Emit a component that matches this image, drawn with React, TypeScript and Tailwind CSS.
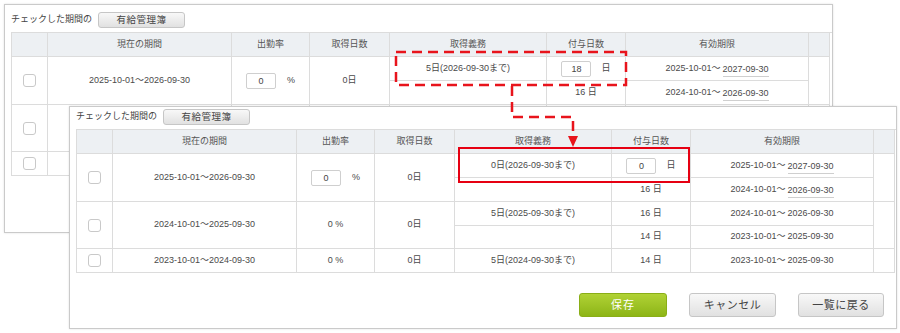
import React from "react";

type Sub = {
  obligation: string;
  grant: string;
  grantInput?: boolean;
  from: string;
  to: string;
  underline?: boolean;
};

type Row = {
  period: string;
  rate: string;
  rateInput?: boolean;
  days: string;
  subs: Sub[];
};

const laterRows: Row[] = [
  {
    period: "2024-10-01～2025-09-30",
    rate: "0 %",
    days: "0日",
    subs: [
      { obligation: "5日(2025-09-30まで)", grant: "16 日", from: "2024-10-01～", to: "2026-09-30" },
      { obligation: "", grant: "14 日", from: "2023-10-01～", to: "2025-09-30" },
    ],
  },
  {
    period: "2023-10-01～2024-09-30",
    rate: "0 %",
    days: "0日",
    subs: [{ obligation: "5日(2024-09-30まで)", grant: "14 日", from: "2023-10-01～", to: "2025-09-30" }],
  },
];

// the back screenshot's lower rows sit under the front one, only their left edge shows
const coveredRows: Row[] = laterRows.map((row) => ({
  period: "",
  rate: "",
  days: "",
  subs: row.subs.map(() => ({ obligation: "", grant: "", from: "", to: "" })),
}));

const firstRow = (obligation: string, grant: string): Row => ({
  period: "2025-10-01～2026-09-30",
  rate: "0",
  rateInput: true,
  days: "0日",
  subs: [
    { obligation, grant, grantInput: true, from: "2025-10-01～", to: "2027-09-30", underline: true },
    { obligation: "", grant: "16 日", from: "2024-10-01～", to: "2026-09-30", underline: true },
  ],
});

const backRows: Row[] = [firstRow("5日(2026-09-30まで)", "18"), ...coveredRows];
const frontRows: Row[] = [firstRow("0日(2026-09-30まで)", "0"), ...laterRows];

const headers = ["", "現在の期間", "出勤率", "取得日数", "取得義務", "付与日数", "有効期限", ""];

function Checkbox() {
  return <span className="block w-[13px] h-[13px] rounded-[3px] border border-[#c9c9c9] bg-white" />;
}

function SmallInput({ value }: { value: string }) {
  return (
    <input
      readOnly
      value={value}
      className="w-[30px] h-[16px] rounded-[2px] border border-[#cfcfcf] bg-white text-center text-[9px] text-[#444] outline-none"
    />
  );
}

function GrayButton({ label, className }: { label: string; className?: string }) {
  return (
    <button
      className={`flex items-center justify-center rounded-[3px] border border-[#c6c6c6] bg-gradient-to-b from-[#f8f8f8] to-[#e1e1e1] text-[#444] ${className ?? ""}`}
    >
      {label}
    </button>
  );
}

function LeaveTable({ rows }: { rows: Row[] }) {
  const cell = "flex items-center justify-center border-r border-b border-[#dcdcdc]";

  return (
    <div className="grid grid-cols-[36px_184px_78px_80px_157px_79px_183px_21px] grid-rows-[24px_24px_24px_24px_23px_24px] border-l border-t border-[#dcdcdc]">
      {headers.map((h, i) => (
        <div key={`h-${i}`} className={`${cell} bg-[#edf0f3] text-[#555]`}>
          {h}
        </div>
      ))}

      {rows.map((row, r) => {
        const span = row.subs.length > 1 ? "row-span-2" : "";
        return (
          <React.Fragment key={r}>
            <div className={`${cell} ${span}`}>
              <Checkbox />
            </div>
            <div className={`${cell} ${span}`}>{row.period}</div>
            <div className={`${cell} ${span}`}>
              {row.rateInput ? (
                <>
                  <SmallInput value={row.rate} />
                  <span className="ml-[11px]">%</span>
                </>
              ) : (
                row.rate
              )}
            </div>
            <div className={`${cell} ${span}`}>{row.days}</div>
            {row.subs.map((sub, s) => (
              <React.Fragment key={s}>
                <div className={cell}>{sub.obligation}</div>
                <div className={cell}>
                  {sub.grantInput ? (
                    <>
                      <SmallInput value={sub.grant} />
                      <span className="ml-[10px]">日</span>
                    </>
                  ) : (
                    sub.grant
                  )}
                </div>
                <div className={cell}>
                  {sub.from && <span>{sub.from}</span>}
                  {sub.to && (
                    <span className={sub.underline ? "ml-[2px] border-b border-[#cfcfcf] leading-[13px] pt-[2px]" : "ml-[2px]"}>
                      {sub.to}
                    </span>
                  )}
                </div>
                {s === 0 && <div className={`${cell} ${span}`} />}
              </React.Fragment>
            ))}
          </React.Fragment>
        );
      })}
    </div>
  );
}

function Panel({
  rows,
  className,
  footer,
}: {
  rows: Row[];
  className: string;
  footer?: boolean;
}) {
  return (
    <div className={`absolute bg-white border border-[#cacaca] shadow-[0_0_2px_rgba(0,0,0,0.12)] pl-[6px] ${className}`}>
      <div className="flex items-center h-[16px] mb-[4px]">
        <span className="text-[#444]">チェックした期間の</span>
        <GrayButton label="有給管理簿" className="ml-[6px] w-[87px] h-[16px] text-[9.5px] tracking-[0.5px]" />
      </div>

      <LeaveTable rows={rows} />

      {footer && (
        <div className="flex justify-end gap-[22px] pr-[12px] mt-[20px]">
          <button className="flex items-center justify-center w-[88px] h-[24px] rounded-[3px] border border-[#8aae17] bg-gradient-to-b from-[#b0d234] to-[#8db515] text-white text-[11px] tracking-[1px]">
            保存
          </button>
          <GrayButton label="キャンセル" className="w-[87px] h-[24px] text-[11px] tracking-[0.5px]" />
          <GrayButton label="一覧に戻る" className="w-[86px] h-[24px] text-[11px] tracking-[0.5px]" />
        </div>
      )}
    </div>
  );
}

export default function App() {
  return (
    <div className="relative w-[900px] h-[333px] overflow-hidden bg-white text-[9px] text-[#4a4a4a] font-['Liberation_Sans','Noto_Sans_CJK_JP',sans-serif]">
      <Panel rows={backRows} className="left-[4px] top-[4px] w-[829px] h-[229px] pt-[7px]" />
      <Panel rows={frontRows} className="left-[69px] top-[106px] w-[828px] h-[223px] pt-[2px]" footer />

      {/* highlight marks drawn over both screenshots */}
      <svg className="absolute inset-0 pointer-events-none" width="900" height="333" viewBox="0 0 900 333">
        <rect x="396" y="52" width="230" height="33" fill="none" stroke="#e8141c" strokeWidth="2.5" strokeDasharray="10 6" />
        <path d="M512 86 V117 H573 V137" fill="none" stroke="#e8141c" strokeWidth="2.5" strokeDasharray="10 6" />
        <polygon points="568,136 578,136 573,147" fill="#e8141c" />
        <rect x="459" y="148" width="230" height="34" fill="none" stroke="#e60012" strokeWidth="2" />
      </svg>
    </div>
  );
}
